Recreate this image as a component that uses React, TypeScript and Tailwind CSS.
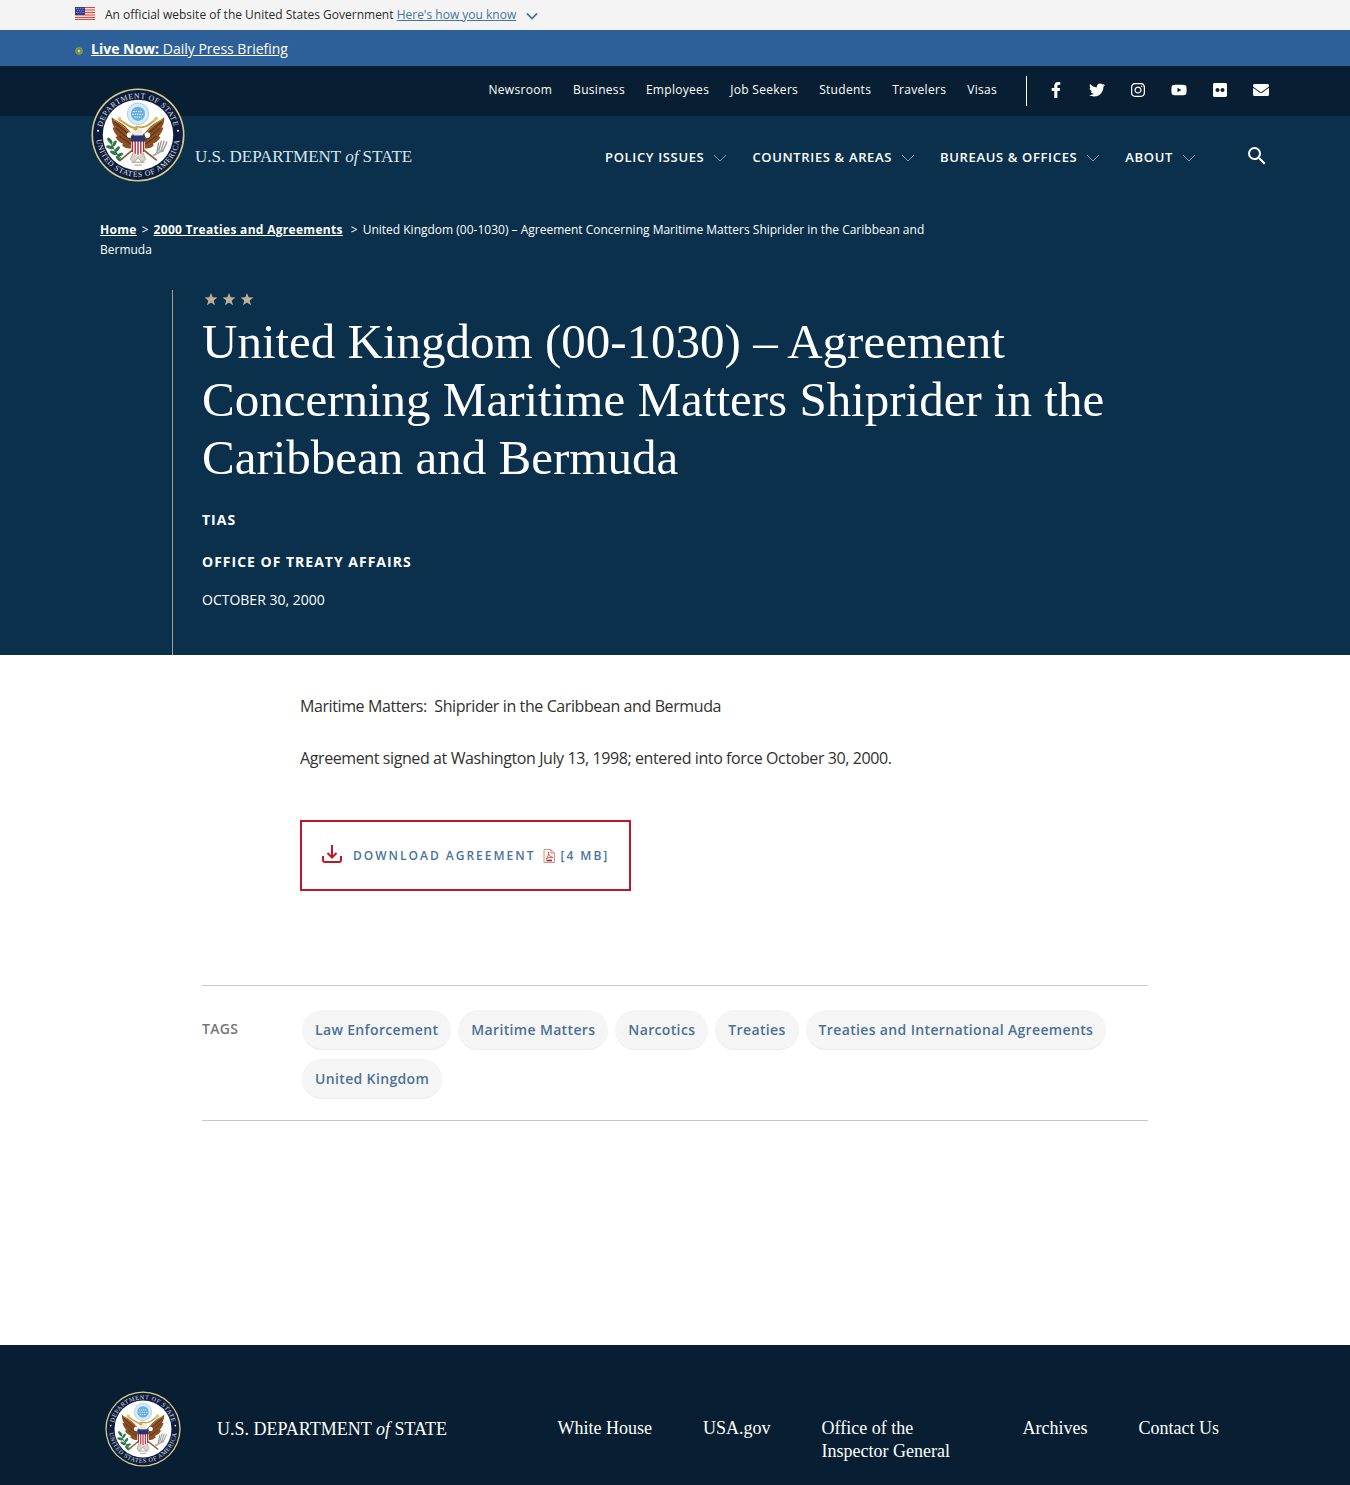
import { useId } from 'react';
import type { ReactNode } from 'react';
import { FaEnvelope, FaFacebookF, FaFlickr, FaInstagram, FaTwitter, FaYoutube } from 'react-icons/fa';
import { MdSearch } from 'react-icons/md';

const utilityLinks = ['Newsroom', 'Business', 'Employees', 'Job Seekers', 'Students', 'Travelers', 'Visas'];
const mainLinks = ['Policy Issues', 'Countries & Areas', 'Bureaus & Offices', 'About'];
const tags = [
  'Law Enforcement',
  'Maritime Matters',
  'Narcotics',
  'Treaties',
  'Treaties and International Agreements',
  'United Kingdom',
];
const footerLinks = ['White House', 'USA.gov', 'Office of the Inspector General', 'Archives', 'Contact Us'];

const socials: { label: string; icon: ReactNode }[] = [
  { label: 'Facebook', icon: <FaFacebookF /> },
  { label: 'Twitter', icon: <FaTwitter /> },
  { label: 'Instagram', icon: <FaInstagram /> },
  { label: 'YouTube', icon: <FaYoutube /> },
  { label: 'Flickr', icon: <FaFlickr /> },
  { label: 'Email', icon: <FaEnvelope /> },
];

function Wing() {
  return (
    <g>
      <path
        d="M46 50 C42 48 39 42 33 38 C29 35 25 34 22 31 C22 36 23 39 25 42 C24 42 23 42 23 42 C24 46 26 49 28 51 C27 52 27 52 26 52 C28 56 31 58 34 59 C34 60 33 61 33 61 C36 64 40 65 43 64 L47 60 Z"
        fill="#8a4f22"
      />
      <path
        d="M25 36 C30 41 34 44 43 52 M27 43 C32 48 36 51 43 56 M30 51 C34 54 38 57 43 60"
        stroke="#5b2f14"
        strokeWidth="1.1"
        fill="none"
      />
      <path d="M24 34 C31 37 36 42 43 49" stroke="#c98f3f" strokeWidth="0.9" fill="none" />
    </g>
  );
}

function Seal({ className }: { className: string }) {
  const id = useId();
  return (
    <svg viewBox="0 0 100 100" className={className} role="img" aria-label="Seal of the Department of State">
      <defs>
        <path id={`${id}t`} d="M11 50 A39 39 0 0 1 89 50" />
        <path id={`${id}b`} d="M5.500 50 A44.500 44.500 0 0 0 94.500 50" />
      </defs>
      <circle cx="50" cy="50" r="49.500" fill="#d9cd86" />
      <circle cx="50" cy="50" r="47.800" fill="#0f1c42" />
      <circle cx="50" cy="50" r="37.500" fill="#ffffff" />
      <g fill="#dfe0dc" fontFamily="'Liberation Serif', serif" fontSize="8.200">
        <text textAnchor="middle" letterSpacing="0.7">
          <textPath href={`#${id}t`} startOffset="50%">DEPARTMENT OF STATE</textPath>
        </text>
        <text textAnchor="middle" letterSpacing="0.7">
          <textPath href={`#${id}b`} startOffset="50%">UNITED STATES OF AMERICA</textPath>
        </text>
      </g>
      <circle cx="7.500" cy="45.500" r="1.100" fill="#fff" />
      <circle cx="92.500" cy="45.500" r="1.100" fill="#fff" />
      <circle cx="50" cy="27.500" r="12" fill="#d5ebf8" />
      <circle cx="50" cy="27.500" r="11.200" fill="none" stroke="#8fbbdc" strokeWidth="1" strokeDasharray="1.6 1" />
      <circle cx="50" cy="27.500" r="7.500" fill="#6aaede" />
      <path d="M45 25 H55 M44 28 H56 M46 31 H54" stroke="#d9effb" strokeWidth="1.200" strokeDasharray="1.500 1" />
      <path d="M29 33 L40 40 Q46 44 49 41 Q54 43 60 40 L71 32" stroke="#c9a449" strokeWidth="2" fill="none" />
      <path d="M29 32 L32 33 M70 31 L67 35" stroke="#e0c469" strokeWidth="3" />
      <Wing />
      <g transform="translate(100 0) scale(-1 1)">
        <Wing />
      </g>
      <path d="M46 51 Q45 44 50 42 Q55 43 55 50 L54 54 H46 Z" fill="#eeeae0" />
      <path d="M50 42.500 Q46 42 44.500 44.500 L48 45.500 Z" fill="#d7a733" />
      <circle cx="41" cy="50" r="3" fill="#fff" />
      <circle cx="60" cy="50" r="3" fill="#fff" />
      <path d="M44 66 L31 77 L28 73 M56 66 L70 77" stroke="#8a5a32" strokeWidth="1.800" fill="none" />
      <path d="M45 68 L42 76 L46 79 L50 74 L54 79 L58 76 L55 68 Z" fill="#d9d2c6" stroke="#9b8a75" strokeWidth="0.700" />
      <path d="M43 79 H57 M46 82 H54" stroke="#9b8a75" strokeWidth="0.900" />
      <path d="M42.500 51 H57.500 V64 Q56.500 69 50 72 Q43.500 69 42.500 64 Z" fill="#ffffff" />
      <path d="M44 56 V68 M47 56 V70 M50 56 V71 M53 56 V70 M56 56 V68" stroke="#b22a3a" strokeWidth="1.500" />
      <path d="M42.500 50.500 H57.500 V57 H42.500 Z" fill="#27366f" />
      <g fill="#2f7a46">
        <ellipse cx="20" cy="56" rx="3.800" ry="1.800" transform="rotate(50 20 56)" />
        <ellipse cx="25" cy="59" rx="3.500" ry="1.700" transform="rotate(-60 25 59)" />
        <ellipse cx="20" cy="63" rx="4" ry="1.800" transform="rotate(15 20 63)" />
        <ellipse cx="28" cy="65" rx="3.500" ry="1.700" transform="rotate(-50 28 65)" />
        <ellipse cx="24" cy="69" rx="4" ry="1.800" transform="rotate(25 24 69)" />
        <ellipse cx="31" cy="71" rx="3.500" ry="1.600" transform="rotate(-20 31 71)" />
        <ellipse cx="29" cy="75" rx="3.500" ry="1.600" transform="rotate(50 29 75)" />
      </g>
      <path d="M20 55 Q23 66 33 76" stroke="#24603a" strokeWidth="1" fill="none" />
      <path d="M72 67 L75 56 M74 68 L78 56 M76 68 L81 57 M70 69 L72 58" stroke="#8d8f8c" strokeWidth="1.300" />
      <path d="M66 72 L77 66" stroke="#a8a79c" strokeWidth="2" />
    </svg>
  );
}

function Wordmark({ className }: { className: string }) {
  return (
    <span className={`font-['Liberation_Serif',serif] whitespace-nowrap ${className}`}>
      U.S. DEPARTMENT <i>of</i> STATE
    </span>
  );
}

function Chevron({ className }: { className: string }) {
  return (
    <svg viewBox="0 0 14 8" className={className} fill="none" stroke="currentColor" aria-hidden="true">
      <path d="M1 1 L7 7 L13 1" />
    </svg>
  );
}

function Flag() {
  return (
    <svg viewBox="0 0 20 13" className="mb-1 h-[13px] w-5 shrink-0" aria-hidden="true">
      <rect width="20" height="13" fill="#f6dfdc" />
      <path d="M0 0.500 H20 M0 3 H20 M0 5.500 H20 M0 8 H20 M0 10.500 H20 M0 12.700 H20" stroke="#d64a3c" strokeWidth="1.200" />
      <rect width="10" height="8" fill="#2f3f94" />
      <path d="M1 1.500 H9 M2 3.500 H9 M1 5.500 H9" stroke="#b9c2ea" strokeWidth="0.800" strokeDasharray="0.900 1.300" />
    </svg>
  );
}

function Star() {
  return (
    <svg viewBox="0 0 24 24" className="size-[14px]" fill="currentColor" aria-hidden="true">
      <path d="M12 1.500 L14.900 9 L23 9.400 L16.700 14.500 L18.800 22.500 L12 18 L5.200 22.500 L7.300 14.500 L1 9.400 L9.100 9 Z" />
    </svg>
  );
}

function DownloadIcon() {
  return (
    <svg viewBox="0 0 20 18" className="mb-1 h-[18px] w-5" fill="none" stroke="#c01728" strokeWidth="2" aria-hidden="true">
      <path d="M10 0 V12 M5.500 8 L10 12.500 L14.500 8" />
      <path d="M1 11 V15 Q1 17 3 17 H17 Q19 17 19 15 V11" />
    </svg>
  );
}

function PdfIcon() {
  return (
    <svg viewBox="0 0 12 14" className="h-[14px] w-3" fill="none" aria-hidden="true">
      <path d="M1 0.500 H8 L11.500 4 V13.500 H1 Z" fill="#fdf6f4" stroke="#c9978e" />
      <path d="M8 0.500 V4 H11.500" stroke="#b98a84" />
      <path d="M3 10 C5 8 6 5 5.500 3 C5 5 7 8 10 8.500 C7 8 5 8.500 3 10 Z" stroke="#d0453a" strokeWidth="0.900" />
      <path d="M3.500 11.500 H9" stroke="#8e2f2a" strokeWidth="1.600" />
    </svg>
  );
}

export default function App() {
  return (
    <div className="bg-white font-['Open_Sans',sans-serif] text-[#323130]">
      <div className="bg-[#f4f4f4]">
        <div className="mx-auto flex h-[30px] max-w-[1200px] items-center text-xs text-[#2b2b2b]">
          <Flag />
          <p className="ml-2.5">
            An official website of the United States Government{' '}
            <button type="button" className="text-[#4773a0] underline">
              Here&#39;s how you know
              <Chevron className="ml-[10px] inline h-2 w-3 stroke-2" />
            </button>
          </p>
        </div>
      </div>

      <div className="bg-[#2d5f99]">
        <div className="mx-auto flex h-9 max-w-[1200px] items-center gap-2 pt-0.5 text-sm text-white">
          <svg viewBox="0 0 8 8" className="mt-1 size-2" aria-hidden="true">
            <circle cx="4" cy="4" r="3.300" fill="#4f7b62" stroke="#a9a94f" />
            <circle cx="4" cy="4" r="1.500" fill="#e6d84e" />
          </svg>
          <a href="#live" className="underline">
            <b>Live Now:</b> Daily Press Briefing
          </a>
        </div>
      </div>

      <div className="bg-[#0a304c] text-white">
        <header className="bg-[linear-gradient(to_bottom,#081f33_50px,transparent_50px)]">
          <div className="mx-auto flex max-w-[1200px] justify-between pr-1.5 pl-4">
            <a href="#home" className="flex items-center gap-2.5 pt-[22px] pb-4">
              <Seal className="size-[94px]" />
              <Wordmark className="pt-[43px] text-[17px] leading-6 text-[#d9e6ee]" />
            </a>
            <div>
              <div className="flex h-[50px] items-center justify-end">
                <nav aria-label="Utility" className="flex gap-[21px] pb-0.5 text-xs tracking-wide">
                  {utilityLinks.map((link) => (
                    <a key={link} href="#utility">{link}</a>
                  ))}
                </nav>
                <div className="ml-[29px] flex h-[30px] items-center gap-[25px] border-l border-white pl-[21px] text-base">
                  {socials.map(({ label, icon }) => (
                    <a key={label} href="#social" aria-label={label} className="pb-0.5">
                      {icon}
                    </a>
                  ))}
                </div>
              </div>
              <nav aria-label="Main" className="flex h-[82px] items-center justify-end gap-[25px] pt-0.5 text-[13px] font-semibold tracking-wider uppercase">
                {mainLinks.map((link) => (
                  <button key={link} type="button" className="flex items-center gap-[9px] uppercase">
                    {link}
                    <Chevron className="h-2 w-[14px] text-[#7d9ab1]" />
                  </button>
                ))}
                <button type="button" aria-label="Search" className="ml-6 pb-1">
                  <MdSearch className="size-6" />
                </button>
              </nav>
            </div>
          </div>
        </header>

        <nav aria-label="Breadcrumb" className="mx-auto max-w-[1150px] pt-[22px] text-xs leading-5">
          <p className="w-3/4">
            <a href="#home" className="font-bold tracking-wide underline">Home</a>
            <span className="mx-[5px]">&gt;</span>
            <a href="#treaties" className="font-bold tracking-wide underline">2000 Treaties and Agreements</a>
            <span className="mr-[5px] ml-2">&gt;</span>
            United Kingdom (00-1030) – Agreement Concerning Maritime Matters Shiprider in the Caribbean and Bermuda
          </p>
        </nav>

        <div className="mx-auto mt-[30px] max-w-[1006px] border-l border-[#a59f8f] pb-[45px] pl-[29px]">
          <div className="flex gap-1 pt-0.5 pl-0.5 text-[#bcae97]">
            <Star />
            <Star />
            <Star />
          </div>
          <h1 className="mt-[7px] font-['Liberation_Serif',serif] text-[49px] leading-[58px]">
            United Kingdom (00-1030) – Agreement Concerning Maritime Matters Shiprider in the Caribbean and Bermuda
          </h1>
          <p className="mt-[23px] text-sm leading-5 font-bold tracking-[1px]">TIAS</p>
          <p className="mt-[22px] text-sm leading-5 font-bold tracking-[1px] uppercase">Office of Treaty Affairs</p>
          <p className="mt-[18px] text-sm leading-5 uppercase">October 30, 2000</p>
        </div>
      </div>

      <main>
        <article className="mx-auto max-w-[750px] pt-[38px] text-base leading-[26px] tracking-tight">
          <p>Maritime Matters:&nbsp; Shiprider in the Caribbean and Bermuda</p>
          <p className="mt-[26px]">
            Agreement signed at Washington July 13, 1998; entered into force October 30, 2000.
          </p>
          <a
            href="#download"
            className="mt-[49px] inline-flex h-[71px] items-center border-2 border-[#c01728] px-5 text-xs font-semibold tracking-[2px] text-[#4773a0] uppercase"
          >
            <DownloadIcon />
            <span className="mr-2 ml-[11px]">Download Agreement</span>
            <PdfIcon />
            <span className="ml-[5px]">[4 MB]</span>
          </a>
        </article>

        <section className="mx-auto mt-[94px] mb-[224px] flex max-w-[946px] border-y border-[#c8c8c8] pt-6 pb-[21px] text-sm font-semibold">
          <h2 className="w-[100px] shrink-0 leading-[38px] tracking-wide text-[#767676] uppercase">Tags</h2>
          <ul className="flex flex-wrap gap-x-[7px] gap-y-[9px] tracking-wide">
            {tags.map((tag) => (
              <li key={tag}>
                <a href="#tag" className="block rounded-full border-b border-[#ebebeb] bg-[#f5f5f5] px-[13px] leading-[39px] text-[#4b7196]">
                  {tag}
                </a>
              </li>
            ))}
          </ul>
        </section>
      </main>

      <footer className="bg-[#081f33] text-white">
        <div className="mx-auto flex max-w-[1140px] items-start pt-[46px] pb-[18px] font-['Liberation_Serif',serif]">
          <Seal className="size-[76px] shrink-0" />
          <Wordmark className="ml-9 pt-[26px] text-lg leading-6" />
          <nav aria-label="Footer" className="ml-auto flex gap-[51px] pt-[26px] pr-[26px] text-lg leading-[23px]">
            {footerLinks.map((link) => (
              <a key={link} href="#footer" className="max-w-[150px]">
                {link}
              </a>
            ))}
          </nav>
        </div>
      </footer>
    </div>
  );
}
